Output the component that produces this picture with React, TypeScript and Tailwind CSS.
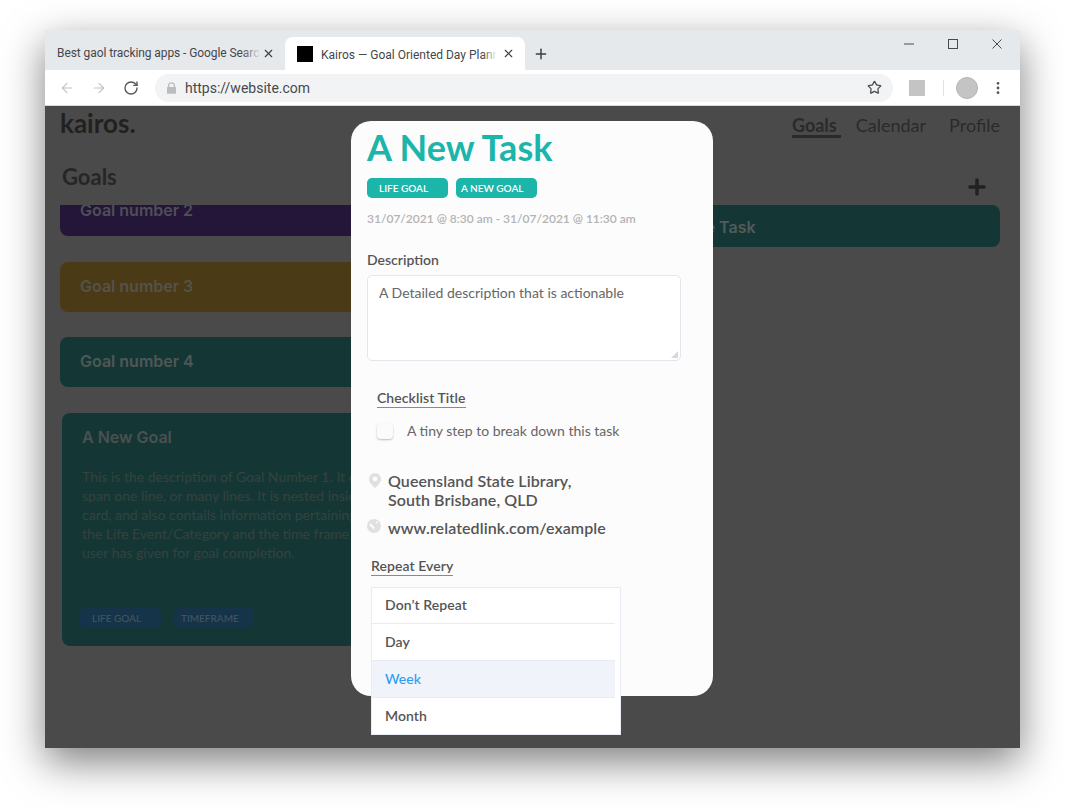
import { ArrowLeft, ArrowRight, RotateCw, Star, X, Plus, MoreVertical } from "lucide-react";

const BrowserChrome = () => (
  <>
    <div className="flex h-[40px] shrink-0 items-end bg-[#e6e9ec] font-['Roboto',sans-serif] text-[12px] text-[#45474a]">
      <div className="relative flex h-[33px] w-[240px] items-center pl-[12px] pb-[1px]">
        <span className="w-[203px] overflow-hidden whitespace-nowrap tracking-[-0.08px]">Best gaol tracking apps - Google Search</span>
        <div className="absolute left-[197px] top-0 h-[33px] w-[19px] bg-gradient-to-r from-transparent to-[#e6e9ec]" />
        <X className="absolute left-[217px] top-[10px] h-[13px] w-[13px] text-[#3c3c3c]" strokeWidth={2} />
      </div>
      <div className="relative flex h-[33px] w-[240px] items-center rounded-t-[8px] bg-white pl-[12px]">
        <div className="h-[16px] w-[16px] bg-black" />
        <span className="ml-[8px] mt-[2px] w-[176px] overflow-hidden whitespace-nowrap">Kairos — Goal Oriented Day Planner</span>
        <div className="absolute left-[198px] top-0 h-[33px] w-[14px] bg-gradient-to-r from-transparent to-white" />
        <X className="absolute left-[217px] top-[10px] h-[13px] w-[13px] text-[#3c3c3c]" strokeWidth={2} />
      </div>
      <Plus className="mb-[8px] ml-[8px] h-[16px] w-[16px] text-[#3c3c3c]" strokeWidth={2.2} />
      <div className="ml-auto mb-[21px] flex items-center gap-[34px] pr-[18px]">
        <svg viewBox="0 0 10 10" className="h-[10px] w-[10px] stroke-[#4a4a4a]"><path d="M0 5h10" /></svg>
        <div className="h-[10px] w-[10px] border border-[#4a4a4a]" />
        <svg viewBox="0 0 10 10" className="h-[10px] w-[10px] stroke-[#4a4a4a]"><path d="M.5.5l9 9M9.500.5l-9 9" /></svg>
      </div>
    </div>
    <div className="flex h-[36px] shrink-0 items-center border-b border-[#d9d9d9] bg-white pl-[14px]">
      <ArrowLeft className="h-[16px] w-[16px] text-[#c2c2c2]" strokeWidth={1.6} />
      <ArrowRight className="ml-[16px] h-[16px] w-[16px] text-[#c2c2c2]" strokeWidth={1.6} />
      <RotateCw className="ml-[16px] h-[16px] w-[16px] text-[#555]" strokeWidth={2} />
      <div className="ml-[16px] flex h-[28px] w-[738px] items-center rounded-full bg-[#f1f3f4] pl-[12px] pr-[11px]">
        <svg viewBox="0 0 10 13" className="h-[12px] w-[9px] fill-[#bdbdbd]">
          <path d="M1 5.5V4a4 4 0 0 1 8 0v1.5h.5a.5.5 0 0 1 .5.5v6a1 1 0 0 1-1 1H1a1 1 0 0 1-1-1V6a.5.5 0 0 1 .5-.5H1zm1.5 0h5V4a2.5 2.5 0 0 0-5 0v1.5z" />
        </svg>
        <span className="ml-[9px] mt-[1px] font-['Roboto',sans-serif] text-[14px] text-[#47494c]">https://website.com</span>
        <Star className="ml-auto h-[15px] w-[15px] text-[#4a4a4a]" strokeWidth={2} />
      </div>
      <div className="ml-[16px] h-[16px] w-[16px] bg-[#c4c4c4]" />
      <div className="ml-[18px] h-[16px] w-px bg-[#e2e2e2]" />
      <div className="ml-[12px] h-[22px] w-[22px] rounded-full border border-[#b5b5b5] bg-[#c4c4c4]" />
      <MoreVertical className="ml-[12px] h-[16px] w-[16px] text-[#555]" strokeWidth={2.2} />
    </div>
  </>
);

const GoalBar = ({ title, color }: { title: string; color: string }) => (
  <div className={`flex h-[50px] shrink-0 items-center rounded-[8px] pb-[2px] pl-[20px] font-['Inter',sans-serif] text-[16px] font-semibold ${color}`}>
    {title}
  </div>
);

const BackgroundPage = () => (
  <div className="flex h-full flex-col overflow-hidden bg-[#4a4a4a] font-['Lato',sans-serif]">
    <div className="flex h-[62px] shrink-0 items-start justify-between pl-[15px] pr-[20px]">
      <span className="-mt-[1px] text-[26px] font-bold leading-[36px] text-[#212121]">kairos.</span>
      <div className="flex pt-[6px] text-[18px] leading-[26px] text-[#2a2a2a]">
        <span className="h-[26px] border-b-[3px] border-[#2a2a2a] pr-[4px] font-bold">Goals</span>
        <span className="ml-[15px]">Calendar</span>
        <span className="ml-[23px]">Profile</span>
      </div>
    </div>
    <div className="flex h-[37px] shrink-0 items-start justify-between pl-[17px] pr-[31px]">
      <span className="-mt-[3px] text-[22px] font-bold leading-[24px] text-[#262626]">Goals</span>
      <Plus className="mt-[7px] h-[24px] w-[24px] text-[#222]" strokeWidth={3.6} />
    </div>
    <div className="flex min-h-0 flex-1 gap-[30px] overflow-hidden pl-[15px] pr-[20px]">
      <div className="flex w-[440px] shrink-0 flex-col gap-[25px]">
        <div className="-mt-[19px] mb-[1px]">
          <GoalBar title="Goal number 2" color="bg-[#241638] text-[#504e58]" />
        </div>
        <GoalBar title="Goal number 3" color="bg-[#4b3a16] text-[#55524a]" />
        <GoalBar title="Goal number 4" color="bg-[#143735] text-[#4f5757]" />
        <div className="ml-[2px] mt-[1px] h-[233px] shrink-0 rounded-[8px] bg-[#143735] pl-[20px] pt-[14px]">
          <div className="font-['Inter',sans-serif] text-[16px] font-semibold leading-[20px] text-[#4b5150]">A New Goal</div>
          <div className="mt-[20px] whitespace-nowrap text-[14px] leading-[19px] text-[#36423f]">
            <div>This is the description of Goal Number 1. It can</div>
            <div>span one line, or many lines. It is nested inside the</div>
            <div>card, and also contails information pertaining to</div>
            <div>the Life Event/Category and the time frame the</div>
            <div>user has given for goal completion.</div>
          </div>
          <div className="-ml-[2px] mt-[46px] flex gap-[12px] text-[10px] font-medium">
            <span className="flex h-[20px] w-[81px] items-center rounded-[5px] bg-[#15344a] pl-[12px] text-[#44545f]">LIFE GOAL</span>
            <span className="flex h-[20px] w-[81px] items-center rounded-[5px] bg-[#15344a] pl-[8px] text-[#44545f]">TIMEFRAME</span>
          </div>
        </div>
      </div>
      <div className="h-[42px] flex-1 rounded-[8px] bg-[#143735] pl-[141px] pt-[11px] font-['Inter',sans-serif] text-[16px] font-semibold leading-[22px] text-[#535b5a]">
        Some Task
      </div>
    </div>
  </div>
);

const PinIcon = () => (
  <svg viewBox="0 0 12 15" className="mt-[1px] h-[15px] w-[12px] shrink-0 fill-[#e0e0e2]">
    <path fillRule="evenodd" d="M6 0a6 6 0 0 1 6 6c0 3.600-4 7.600-6 9-2-1.400-6-5.400-6-9a6 6 0 0 1 6-6zm0 3.600a2.400 2.400 0 1 0 0 4.800 2.400 2.400 0 0 0 0-4.800z" />
  </svg>
);

const GlobeIcon = () => (
  <svg viewBox="0 0 14 14" className="h-[14px] w-[14px] shrink-0 fill-[#e0e0e2]">
    <path fillRule="evenodd" d="M7 0a7 7 0 1 1 0 14A7 7 0 0 1 7 0zM3 4.500c-.6.7-.4 2 .3 2.700.7.7 1.600.6 2 1.400.3.7.2 1.600 1 1.800.8.2 1.200-.7 1.200-1.600 0-1-.9-1.400-1.600-2C5 6.100 4.800 5 4.300 4.500 3.900 4.100 3.400 4 3 4.500zM10 2.500c-.8 0-1.300.6-1 1.200.3.5 1 .6 1.500.4.500-.3.300-1.600-.5-1.600z" />
  </svg>
);

const repeatOptions = [
  { label: "Don’t Repeat", row: "h-[36px] pb-[2px] border-b border-[#e8ebf3]" },
  { label: "Day", row: "h-[37px] pb-[1px] border-b border-[#e8ebf3]" },
  { label: "Week", row: "h-[37px] pb-[1px] border-b border-[#e8ebf3] bg-[#f0f3f9] font-medium text-[#2aa0f5]" },
  { label: "Month", row: "h-[36px] pb-[1px]" },
];

const TaskModal = () => (
  <div className="absolute left-[306px] top-[15px] h-[575px] w-[362px] rounded-[20px] bg-[#fcfcfd] px-[16px] font-['Lato',sans-serif] text-[#555]">
    <h1 className="mt-[4px] text-[36px] font-bold leading-[44px] text-[#1cb5a9]">A New Task</h1>
    <div className="mt-[9px] flex gap-[8px] text-[10px] font-semibold text-white">
      <span className="flex h-[20px] w-[81px] items-center rounded-[5px] bg-[#1cb5a9] pl-[12px]">LIFE GOAL</span>
      <span className="flex h-[20px] w-[81px] items-center rounded-[5px] bg-[#1cb5a9] pl-[5px]">A NEW GOAL</span>
    </div>
    <div className="mt-[13px] text-[12px] font-semibold leading-[16px] text-[#b3b3b3]">31/07/2021 @ 8:30 am - 31/07/2021 @ 11:30 am</div>
    <div className="mt-[24px] text-[14px] font-semibold leading-[18px]">Description</div>
    <div className="relative mt-[6px] h-[86px] w-[314px] rounded-[5px] border border-[#e4e6ee] bg-white pl-[11px] pt-[8px] text-[14px] leading-[18px] text-[#666]">
      A Detailed description that is actionable
      <svg viewBox="0 0 8 8" className="absolute bottom-[2px] right-[2px] h-[7px] w-[7px] fill-[#d5d8e0]">
        <path d="M8 0v8H0z" />
      </svg>
    </div>
    <div className="ml-[10px] mt-[28px] w-fit border-b border-[#8a8a8a] text-[14px] font-semibold leading-[18px] tracking-[0.07px]">Checklist Title</div>
    <div className="ml-[10px] mt-[14px] flex items-center gap-[14px]">
      <div className="h-[16px] w-[16px] rounded-[4px] bg-[#fbfbfd] shadow-[0_1px_2px_rgba(0,0,0,0.25)]" />
      <span className="text-[14px] leading-[18px] text-[#666]">A tiny step to break down this task</span>
    </div>
    <div className="ml-[2px] mt-[32px] flex gap-[7px]">
      <PinIcon />
      <div className="-mt-[1px] text-[16px] font-semibold leading-[19px] tracking-[0.08px]">
        Queensland State Library,
        <br />
        South Brisbane, QLD
      </div>
    </div>
    <div className="mt-[10px] flex gap-[7px]">
      <GlobeIcon />
      <div className="-mt-[1px] text-[16px] font-semibold leading-[19px] tracking-[0.08px]">www.relatedlink.com/example</div>
    </div>
    <div className="ml-[4px] mt-[20px] w-fit border-b border-[#8a8a8a] text-[14px] font-semibold leading-[18px] tracking-[0.07px]">Repeat Every</div>
    <div className="absolute left-[20px] top-[466px] w-[250px] border border-[#e8ebf3] bg-white pr-[5px] text-[14px] font-semibold tracking-[0.07px]">
      {repeatOptions.map((option) => (
        <div key={option.label} className={`flex items-center pl-[13px] ${option.row}`}>
          {option.label}
        </div>
      ))}
    </div>
  </div>
);

const App = () => {
  return (
    <div className="h-[808px] w-[1065px] overflow-hidden bg-white pl-[45px] pt-[30px]">
      <div className="flex h-[718px] w-[975px] flex-col shadow-[0_14px_38px_rgba(0,0,0,0.5)]">
        <BrowserChrome />
        <div className="relative min-h-0 flex-1">
          <BackgroundPage />
          <TaskModal />
        </div>
      </div>
    </div>
  );
};

export default App;
